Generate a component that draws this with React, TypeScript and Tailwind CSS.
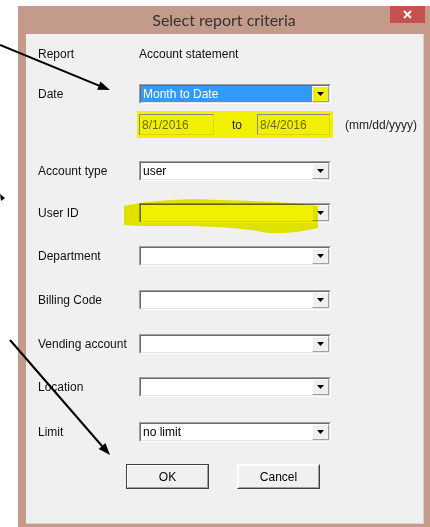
import React from "react";

const ui = { fontFamily: '"Liberation Sans", Arial, sans-serif' };
const titleFont = { fontFamily: '"Segoe UI", Lato, "Liberation Sans", sans-serif' };

function DropButton({ hot }: { hot?: boolean }) {
    return (
        <div
            className={`flex w-[17px] items-center justify-center border border-t-white border-l-white border-b-[#a0a0a0] border-r-[#a0a0a0] ${
                hot ? "bg-[#f0f000]" : "bg-[#f0f0f0]"
            }`}
        >
            <svg width="7" height="4" viewBox="0 0 7 4">
                <polygon points="0,0 7,0 3.5,4" fill="#000" />
            </svg>
        </div>
    );
}

function Combo({ value, selected, hot }: { value?: string; selected?: boolean; hot?: boolean }) {
    return (
        <div className="flex h-[20px] w-[192px] border border-t-[#a0a0a0] border-l-[#a0a0a0] border-b-white border-r-white">
            <div className="flex flex-1 border border-t-[#696969] border-l-[#696969] border-b-[#e3e3e3] border-r-[#e3e3e3] bg-white">
                <div
                    className={`flex flex-1 items-center pl-[2px] text-[12px] leading-none ${
                        selected ? "bg-[#3399ff] text-white" : "text-black"
                    }`}
                >
                    {value}
                </div>
                <DropButton hot={hot} />
            </div>
        </div>
    );
}

function Field({ label, children, className = "" }: { label: string; children: React.ReactNode; className?: string }) {
    return (
        <div className={`flex h-[20px] items-center ${className}`}>
            <div className="w-[101px] text-[12px] text-[#111]">{label}</div>
            {children}
        </div>
    );
}

function DateBox({ value }: { value: string }) {
    return (
        <div className="flex h-[21px] items-center border border-t-[#8a8a8a] border-l-[#8a8a8a] border-b-[#d8d800] border-r-[#d8d800] pl-[2px] text-[12px] text-[#6b6b00]">
            {value}
        </div>
    );
}

function WinButton({ label, isDefault }: { label: string; isDefault?: boolean }) {
    return (
        <div
            className={`flex h-[25px] w-[83px] items-center justify-center ${
                isDefault ? "border border-[#404040]" : "border border-t-white border-l-white border-b-[#404040] border-r-[#404040]"
            }`}
        >
            <div className="flex h-full w-full items-center justify-center border border-t-white border-l-white border-b-[#a0a0a0] border-r-[#a0a0a0] bg-[#f0f0f0] text-[12px] text-black">
                {label}
            </div>
        </div>
    );
}

export default function App() {
    return (
        <div className="relative h-[527px] w-[430px] overflow-hidden bg-white" style={ui}>
            {/* Dialog window */}
            <div className="ml-[18px] mt-[6px] flex h-[521px] w-[412px] flex-col bg-[#c49b8a]">
                <div className="grid h-[28px] grid-cols-[1fr_auto_1fr]">
                    <div />
                    <div className="self-center text-[16px] leading-none text-[#333]" style={titleFont}>
                        Select report criteria
                    </div>
                    <div className="mr-[5px] flex h-[17px] w-[35px] items-center justify-center self-start justify-self-end bg-[#c75050]">
                        <svg width="9" height="9" viewBox="0 0 9 9">
                            <path d="M1 1 L8 8 M8 1 L1 8" stroke="#fff" strokeWidth="1.8" />
                        </svg>
                    </div>
                </div>

                <div className="mb-[3px] ml-[8px] mr-[6px] flex flex-1 flex-col border-r border-b border-[#d4d4d4] bg-[#f0f0f0] pl-[12px] pt-[10px]">
                    <Field label="Report">
                        <div className="text-[12px] text-[#111]">Account statement</div>
                    </Field>

                    <Field label="Date" className="mt-[20px]">
                        <Combo value="Month to Date" selected hot />
                    </Field>

                    {/* date range, highlighted */}
                    <div className="ml-[99px] mt-[7px] flex h-[27px] items-center">
                        <div className="flex w-[196px] items-center bg-[#f0f000] px-[2px] py-[3px]">
                            <div className="w-[75px]">
                                <DateBox value="8/1/2016" />
                            </div>
                            <div className="w-[43px] pl-[18px] text-[12px] text-[#222]">to</div>
                            <div className="w-[73px]">
                                <DateBox value="8/4/2016" />
                            </div>
                        </div>
                        <div className="ml-[12px] text-[12px] text-[#222]">(mm/dd/yyyy)</div>
                    </div>

                    <Field label="Account type" className="mt-[23px]">
                        <Combo value="user" />
                    </Field>
                    <Field label="User ID" className="mt-[22px]">
                        <Combo />
                    </Field>
                    <Field label="Department" className="mt-[23px]">
                        <Combo />
                    </Field>
                    <Field label="Billing Code" className="mt-[24px]">
                        <Combo />
                    </Field>
                    <Field label="Vending account" className="mt-[24px]">
                        <Combo />
                    </Field>
                    <Field label="Location" className="mt-[23px]">
                        <Combo />
                    </Field>
                    <Field label="Limit" className="mt-[25px]">
                        <Combo value="no limit" />
                    </Field>

                    <div className="mt-[22px] flex gap-[28px] pl-[88px]">
                        <WinButton label="OK" isDefault />
                        <WinButton label="Cancel" />
                    </div>
                </div>
            </div>

            {/* highlighter stroke over the User ID box */}
            <svg className="pointer-events-none absolute left-0 top-0 mix-blend-multiply" width="430" height="527">
                <path
                    d="M124 206 C150 200 190 198 220 200 C260 201 300 203 318 206 L318 228 C300 232 280 235 262 232 C240 227 200 226 170 226 C150 226 135 226 124 225 Z"
                    fill="#f0f000"
                />
            </svg>

            {/* annotation arrows */}
            <svg className="pointer-events-none absolute left-0 top-0" width="430" height="527">
                <line x1="0" y1="45" x2="99" y2="85.6" stroke="#000" strokeWidth="2" />
                <polygon points="110,90 97.2,89.8 100.4,81.4" fill="#000" />
                <polygon points="0,194 5,198 1,201" fill="#000" />
                <line x1="10" y1="340" x2="102" y2="446" stroke="#000" strokeWidth="2" />
                <polygon points="110,455 98.7,449 105.4,443" fill="#000" />
            </svg>
        </div>
    );
}
